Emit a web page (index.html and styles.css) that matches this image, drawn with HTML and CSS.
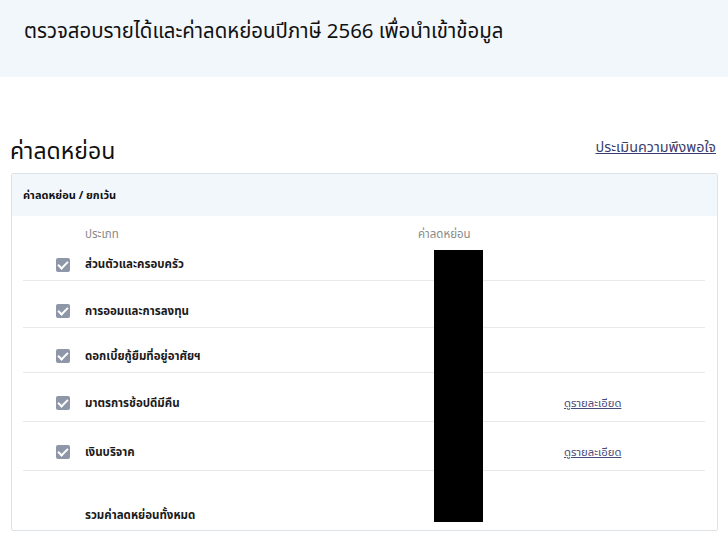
FILE: index.html
```html
<!DOCTYPE html>
<html>
<head>
<meta charset="UTF-8">
<title>ค่าลดหย่อน</title>
<link rel="stylesheet" href="styles.css">
</head>
<body>
<div class="banner">
	<h1>ตรวจสอบรายได้และค่าลดหย่อนปีภาษี 2566 เพื่อนำเข้าข้อมูล</h1>
</div>

<div class="section_head">
	<h2>ค่าลดหย่อน</h2>
	<a class="link" href="#">ประเมินความพึงพอใจ</a>
</div>

<div class="card">
	<div class="card_head">ค่าลดหย่อน / ยกเว้น</div>
	<div class="card_body">
		<div class="black_box"></div>
		<div class="row row_label">
			<span class="chk_cell"></span>
			<span class="name gray">ประเภท</span>
			<span class="amt gray">ค่าลดหย่อน</span>
			<span class="more"></span>
		</div>
		<div class="row item first">
			<span class="chk_cell"><span class="chk"></span></span>
			<span class="name">ส่วนตัวและครอบครัว</span>
			<span class="amt"></span>
			<span class="more"></span>
		</div>
		<div class="row item">
			<span class="chk_cell"><span class="chk"></span></span>
			<span class="name">การออมและการลงทุน</span>
			<span class="amt"></span>
			<span class="more"></span>
		</div>
		<div class="row item short">
			<span class="chk_cell"><span class="chk"></span></span>
			<span class="name">ดอกเบี้ยกู้ยืมที่อยู่อาศัยฯ</span>
			<span class="amt"></span>
			<span class="more"></span>
		</div>
		<div class="row item tall">
			<span class="chk_cell"><span class="chk"></span></span>
			<span class="name">มาตรการช้อปดีมีคืน</span>
			<span class="amt"></span>
			<span class="more"><a class="link small" href="#">ดูรายละเอียด</a></span>
		</div>
		<div class="row item tall">
			<span class="chk_cell"><span class="chk"></span></span>
			<span class="name">เงินบริจาค</span>
			<span class="amt"></span>
			<span class="more"><a class="link small" href="#">ดูรายละเอียด</a></span>
		</div>
		<div class="row total">
			<span class="chk_cell"></span>
			<span class="name">รวมค่าลดหย่อนทั้งหมด</span>
			<span class="amt"></span>
			<span class="more"></span>
		</div>
	</div>
</div>
</body>
</html>
```

FILE: styles.css
```css
*{
	margin:0;
	padding:0;
	box-sizing:border-box;
}
body{
	font-family:"Noto Sans Thai", "Noto Sans", "DejaVu Sans", sans-serif;
	color:#222;
	background:#fff;
}
.banner{
	background-color:#f1f7fb;
	height:77px;
	padding:16px 24px 0 24px;
}
.banner h1{
	font-size:20.4px;
	font-weight:400;
	color:#111;
}
.section_head{
	margin-top:58px;
	padding:0 12px 0 10px;
	display:flex;
	justify-content:space-between;
	align-items:flex-start;
	height:38px;
}
.section_head h2{
	font-size:23px;
	font-weight:400;
	color:#111;
}
.section_head .link{
	margin-top:2px;
}
.link{
	color:#3c3d6b;
	text-decoration:underline;
	font-size:14.4px;
}
.link.small{
	font-size:11.3px;
	color:#4a4b78;
}
.card{
	margin:0 10px 0 11px;
	border:1px solid #dde2e6;
	border-radius:2px;
}
.card_head{
	background-color:#f1f7fb;
	height:42px;
	padding:0 11px;
	display:flex;
	align-items:center;
	font-size:11px;
	font-weight:700;
	color:#111;
}
.card_body{
	position:relative;
	padding:0 12px 0 11px;
}
.black_box{
	position:absolute;
	left:422px;
	top:34px;
	width:49px;
	height:272px;
	background:#000;
}
.row{
	display:flex;
	align-items:center;
	font-size:11.5px;
}
.chk_cell{
	width:62px;
	padding-left:33px;
	display:flex;
}
.name{
	width:333px;
	font-weight:700;
	color:#1a1a1a;
}
.amt{
	width:146px;
}
.more{
	flex:1;
}
.gray{
	font-weight:400;
	color:#8a8a8a;
}
.row_label{
	height:30px;
	padding-top:6px;
}
.item{
	height:47px;
	padding-top:14px;
	border-bottom:1px solid #e6e8ea;
}
.item.first{
	height:35px;
	padding-top:3px;
}
.item.short{
	height:45px;
	padding-top:12px;
}
.item.tall{
	height:49px;
	padding-top:12px;
}
.total{
	height:59px;
	padding-top:30px;
}
.chk{
	width:14px;
	height:14px;
	border-radius:2px;
	background-color:#8d97a8;
	position:relative;
}
.chk:after{
	content:"";
	position:absolute;
	left:4px;
	top:1px;
	width:4px;
	height:8px;
	border:solid #fff;
	border-width:0 2px 2px 0;
	transform:rotate(45deg);
}
```
